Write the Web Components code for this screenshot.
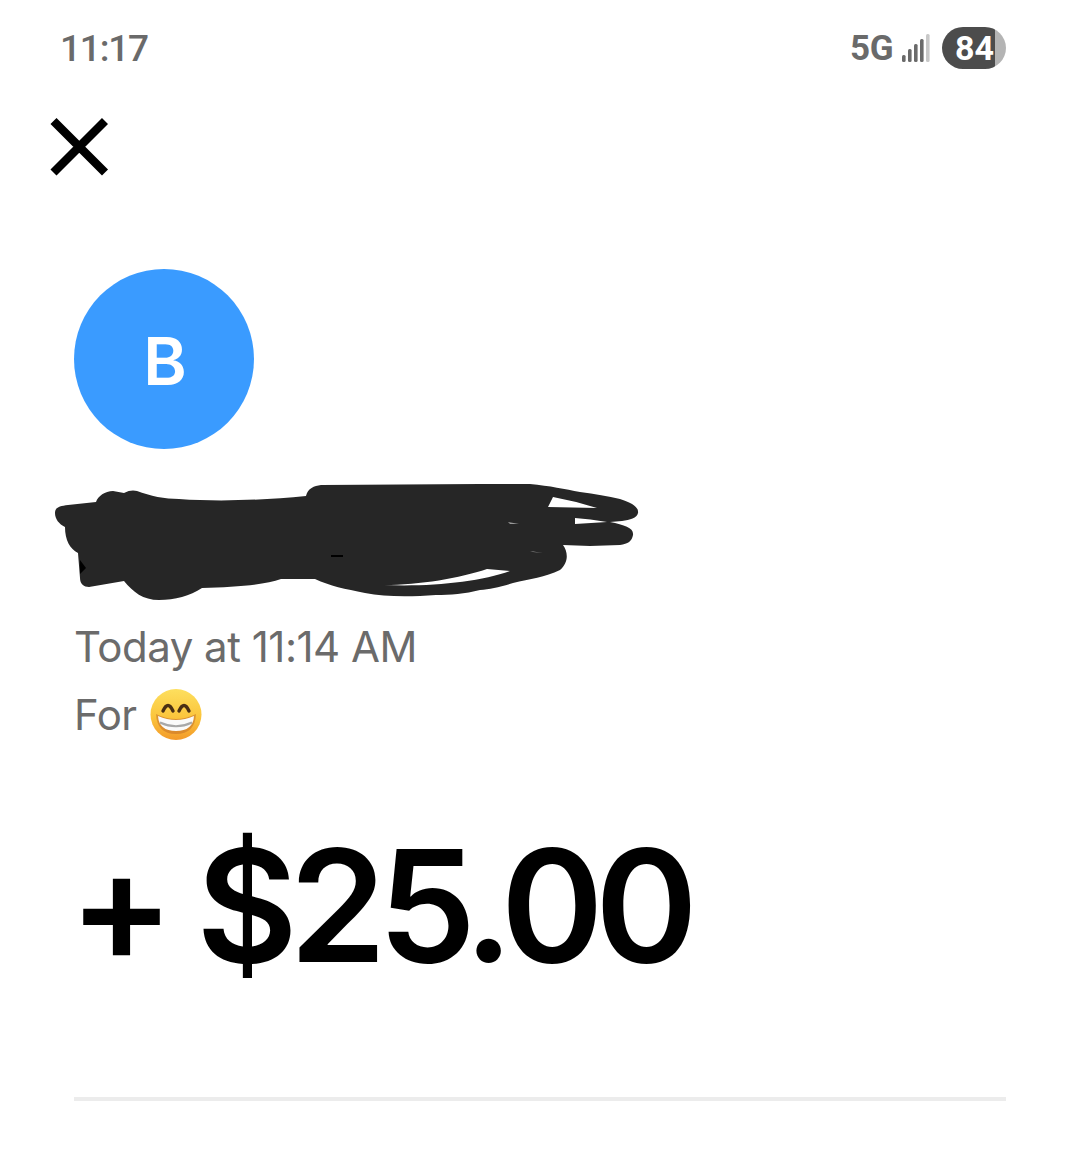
<!DOCTYPE html>
<html lang="en"><head><meta charset="utf-8"><title>Payment</title>
<style>html,body{margin:0;background:#fff}body{width:1080px;height:1150px;overflow:hidden;font-family:Inter,"Liberation Sans",sans-serif}</style>
</head><body>
<payment-screen>
  <status-bar slot="status" time="11:17" network="5G" battery="84"></status-bar>
  <close-button slot="close"></close-button>
  <avatar-badge initial="B"></avatar-badge>
  <scribble-mark></scribble-mark>
  <payment-meta><span>Today at 11:14 AM</span></payment-meta>
  <payment-meta class="for"><span>For</span><grin-emoji></grin-emoji></payment-meta>
  <amount-display>+ $25.00</amount-display>
  <rule-line></rule-line>
</payment-screen>
<script>
function def(name, css, html){
  customElements.define(name, class extends HTMLElement{
    connectedCallback(){
      if(this.shadowRoot) return;
      const r=this.attachShadow({mode:'open'});
      r.innerHTML='<style>'+css+'</style>'+(typeof html==='function'?html(this):html);
    }
  });
}
def('payment-screen',
 ':host{display:flex;flex-direction:column;width:1080px;height:1150px;box-sizing:border-box}.body{display:flex;flex-direction:column;padding:0 74px}',
 '<slot name="status"></slot><slot name="close"></slot><div class="body"><slot></slot></div>');
def('status-bar',
 ':host{display:flex;align-items:center;height:96px;padding:0 74px 0 60px;box-sizing:border-box;font-family:Roboto,Inter,sans-serif;color:#6a6a6a;font-weight:500}'
 +'.t{font-size:37px;flex:1;letter-spacing:-1.2px}.n{font-size:35px;font-weight:700;letter-spacing:-.5px}svg{display:block;margin:0 12px 0 9px}'
 +'.b{width:64px;height:42px;border-radius:21px;background:linear-gradient(90deg,#4c4c4c 0 53px,#b4b4b4 53px);color:#fff;font-size:34px;font-weight:700;display:flex;align-items:center;padding-left:13px;box-sizing:border-box}',
 e=>`<span class="t">${e.getAttribute('time')}</span><span class="n">${e.getAttribute('network')}</span>
 <svg width="28" height="30" viewBox="0 0 28 30"><g fill="#6a6a6a"><rect x="0" y="22" width="3.6" height="7" rx="1.5"/><rect x="6" y="16" width="3.6" height="13" rx="1.5"/><rect x="12" y="11" width="3.6" height="18" rx="1.5"/><rect x="18" y="6" width="3.6" height="23" rx="1.5"/></g><rect x="24" y="1" width="3.6" height="28" rx="1.5" fill="#c8c8c8"/></svg>
 <span class="b">${e.getAttribute('battery')}</span>`);
def('close-button',
 ':host{display:block;padding:18px 0 0 46px;height:172px;box-sizing:border-box}svg{display:block}',
 '<svg width="66" height="66" viewBox="0 0 66 66"><path d="M7.500 7 59 58.500M59 7 7.500 58.500" stroke="#000" stroke-width="8.500" fill="none"/></svg>');
def('avatar-badge',
 ':host{display:flex;align-items:center;justify-content:center;width:180px;height:180px;border-radius:50%;background:#3a9bff;color:#fff;font:600 66px Inter,sans-serif;margin-top:1px}span{position:relative;left:1px;top:2px}',
 e=>`<span>${e.getAttribute('initial')}</span>`);
def('scribble-mark',
 ':host{display:block;height:171px;margin-left:-34px}svg{display:block;margin-top:21px}',
 `<svg width="620" height="150" viewBox="40 470 620 150"><path fill="#262626" fill-rule="evenodd" d="M55 513C55 507 60 506 68 505L96 502C98 496 105 491 113 491L124 493C129 490 134 490 137 491C150 496 165 499 179 499C220 502 265 500 306 496C308 488 314 486 321 485L480 484L530 484C550 486 565 489 580 492C595 494 608 496 620 499C632 503 639 507 638 513C637 518 630 520 622 521L610 522C625 525 634 528 633 535C632 541 628 544 620 545L590 546L563 545C568 552 569 562 560 570C545 577 530 579 513 583C500 587 490 589 480 590C465 594 450 595 436 595C410 597 385 597 365 593C345 589 330 586 315 579L281 579C265 585 235 587 202 588C190 596 175 600 159 600C143 600 133 592 124 581L89 587C84 587 80 584 80 578L78 553C70 549 65 540 65 527C59 524 55 519 55 513ZM553 497 548 507 597 508Q575 501 553 497ZM575 518 575 524 607 522Q590 519 575 518ZM384 585C420 585 460 578 487 569L510 571C480 582 430 587 384 585Z"/><path d="M508 522 519 524 510 524ZM530 551 543 553 533 552Z" fill="#999"/><path d="M331 555h12v2h-12zM80 560l6 8-6 6z" fill="#000"/></svg>`);
def('payment-meta',
 ':host{display:flex;align-items:center;height:68px;color:#6b6b6b;font:400 42px Inter,sans-serif;letter-spacing:-.5px;gap:13px;position:relative;top:-8px}',
 '<slot></slot>');
def('grin-emoji',
 ':host{display:block;width:52px;height:52px;position:relative;top:1px}svg{display:block}',
 `<svg width="52" height="52" viewBox="0 0 52 52"><defs><linearGradient id="g" x1="0" y1="0" x2="0" y2="1"><stop offset="0" stop-color="#fddf5e"/><stop offset=".55" stop-color="#fbc53c"/><stop offset="1" stop-color="#f39a2a"/></linearGradient></defs><circle cx="26" cy="25.500" r="25.500" fill="url(#g)"/><path d="M6 25Q26 35 46 25Q45 45 26 45Q7 45 6 25Z" fill="#c9772a" opacity=".6"/><path d="M8 27Q26 35 44 27Q43 42 26 42Q9 42 8 27Z" fill="#fafafa"/><path d="M10 33.500Q26 41 42 33.500" fill="none" stroke="#a8a8a8" stroke-width="2"/><path d="M13 22Q18 11 23 22M29 22Q34 11 39 22" fill="none" stroke="#4a2f14" stroke-width="3.400" stroke-linecap="round"/></svg>`);
def('amount-display',
 ':host{display:block;margin:36px 0 0 -5px;height:228px;font:600 156px/228px Inter,sans-serif;color:#000;letter-spacing:-8.500px;white-space:nowrap}',
 '<slot></slot>');
def('rule-line',':host{display:block;height:4px;background:#ececec;margin-top:77px}','');
</script>
</body></html>
